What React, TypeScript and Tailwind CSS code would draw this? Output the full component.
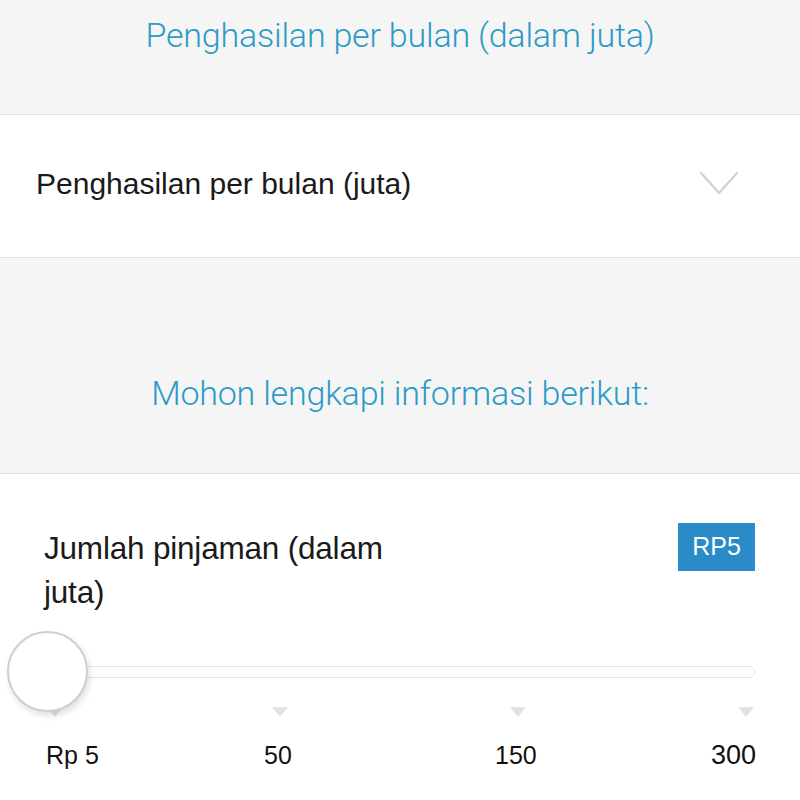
const font = { fontFamily: '"Liberation Sans", Arial, sans-serif' };
const light = { fontFamily: 'Roboto, "Liberation Sans", Arial, sans-serif' };

// Tick marks sit on a non-linear scale, so each one carries its own offset
const ticks = [
  { tick: 'left-[47px]', label: 'Rp 5', labelPos: 'left-[46px]' },
  { tick: 'left-[272px]', label: '50', labelPos: 'left-[264px]' },
  { tick: 'left-[510px]', label: '150', labelPos: 'left-[495px]' },
  { tick: 'left-[738px]', label: '300', labelPos: 'left-[711px] text-[27px]' },
];

function Chevron() {
  return (
    <svg width="40" height="24" viewBox="0 0 40 24" fill="none">
      <polyline points="2,2 20,22 38,2" stroke="#d2d2d2" strokeWidth="2.4" strokeLinecap="round" strokeLinejoin="round" />
    </svg>
  );
}

function SectionTitle({ children }: { children: React.ReactNode }) {
  return (
    <h2 className="text-[34px] font-light leading-[44px] tracking-[-0.2px] text-[#2c9bc7]" style={light}>
      {children}
    </h2>
  );
}

export default function App() {
  return (
    <div className="min-h-[800px] w-[800px] bg-white" style={font}>
      {/* Section header */}
      <div className="flex h-[115px] justify-center border-b border-[#e2e2e2] bg-[#f5f5f5] pt-[13px]">
        <SectionTitle>Penghasilan per bulan (dalam juta)</SectionTitle>
      </div>

      {/* Select row */}
      <div className="flex h-[143px] items-center justify-between border-b border-[#e2e2e2] pb-[6px] pl-[36px] pr-[61px]">
        <span className="text-[30px] text-[#1a1a1a]">Penghasilan per bulan (juta)</span>
        <Chevron />
      </div>

      {/* Section header */}
      <div className="flex h-[216px] items-center justify-center border-b border-[#e2e2e2] bg-[#f5f5f5] pt-[54px]">
        <SectionTitle>Mohon lengkapi informasi berikut:</SectionTitle>
      </div>

      {/* Loan amount */}
      <div className="flex items-start justify-between pl-[44px] pr-[45px] pt-[49px]">
        <p className="mt-[3px] w-[370px] text-[31.5px] leading-[44px] tracking-[-0.2px] text-[#1a1a1a]">
          Jumlah pinjaman (dalam juta)
        </p>
        <span className="flex h-[48px] w-[77px] items-center justify-center bg-[#2b8bc9] text-[25px] text-white">
          RP5
        </span>
      </div>

      {/* Slider */}
      <div className="relative mt-[36px] h-[140px]">
        <div className="absolute left-[50px] top-[16px] h-[12px] w-[705px] rounded-full border border-[#e3e3e3] bg-white" />
        {ticks.map((t) => (
          <div key={t.label}>
            <div className={`absolute top-[57px] h-0 w-0 border-x-[8px] border-t-[10px] border-x-transparent border-t-[#e2e2e2] ${t.tick}`} />
            <span className={`absolute top-[90px] text-[25px] leading-[30px] text-[#111] ${t.labelPos}`}>{t.label}</span>
          </div>
        ))}
        <div className="absolute left-[7px] top-[-19px] h-[81px] w-[81px] rounded-full border-2 border-[#cfcfcf] bg-white shadow-[2px_4px_6px_rgba(0,0,0,0.12)]" />
      </div>
    </div>
  );
}
